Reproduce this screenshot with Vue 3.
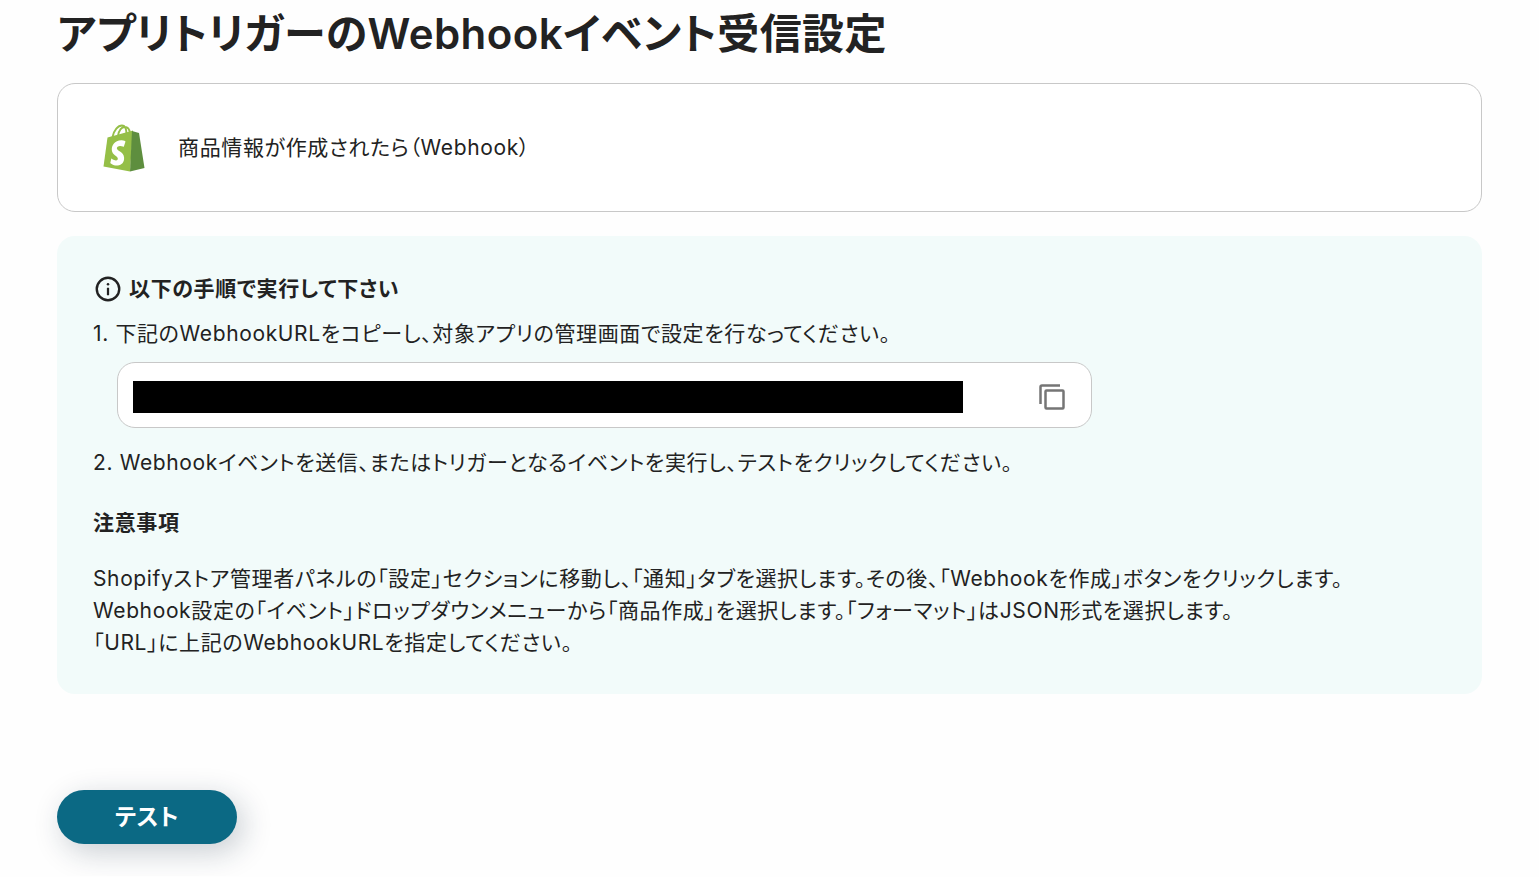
<script setup>
import { ref } from 'vue'

const webhookUrl = ref('')
const notes = [
  'Shopifyストア管理者パネルの「設定」セクションに移動し、「通知」タブを選択します。その後、「Webhookを作成」ボタンをクリックします。',
  'Webhook設定の「イベント」ドロップダウンメニューから「商品作成」を選択します。「フォーマット」はJSON形式を選択します。',
  '「URL」に上記のWebhookURLを指定してください。',
]
</script>

<template>
  <main class="page">
    <h1 class="title">アプリトリガーのWebhookイベント受信設定</h1>

    <section class="card">
      <svg class="logo" viewBox="0 0 42 48" aria-hidden="true">
        <path d="M9.500 13C11 6 15 1.500 19 1.500c3.500 0 4.500 4 4.500 9M15 12c1-6 4-9 7-9 3 0 4.500 2.500 5 6" fill="none" stroke="#95bf47" stroke-width="1.900" />
        <path d="M4.500 13.500 30 6.500l-3 41L.5 42.500Z" fill="#95bf47" />
        <path d="m29 7 7 2 5.500 35L27 47.500Z" fill="#5e8e3e" />
        <path d="m22.500 17.500-1.700 5.300s-1.800-1-3.900-.9c-3 .2-3 2-3 2.500.2 2.500 6.900 3.100 7.200 9 .3 4.700-2.500 7.800-6.400 8-4.800.3-7.400-2.500-7.400-2.500l1-4.300s2.600 2 4.700 1.900c1.400-.1 1.900-1.200 1.800-2-.2-3.300-5.600-3.100-6-8.600-.2-4.600 2.800-9.200 9.400-9.600 2.600-.2 4.300 1.200 4.300 1.200Z" fill="#fff" />
      </svg>
      <p>商品情報が作成されたら（Webhook）</p>
    </section>

    <section class="panel">
      <h2 class="lead">
        <svg class="info" viewBox="0 0 24 24" aria-hidden="true">
          <circle cx="12" cy="12" r="9" fill="none" stroke="currentColor" stroke-width="1.900" />
          <circle cx="12" cy="8.200" r="1" fill="currentColor" />
          <path d="M11.100 11h1.800v6h-1.800z" fill="currentColor" />
        </svg>
        以下の手順で実行して下さい
      </h2>
      <p class="step"><label for="webhook-url">1. 下記のWebhookURLをコピーし、対象アプリの管理画面で設定を行なってください。</label></p>
      <div class="field">
        <input id="webhook-url" v-model="webhookUrl" class="url" type="text" readonly />
        <button class="copy" type="button" aria-label="コピー">
          <svg viewBox="0 0 26 26" aria-hidden="true">
            <path d="M1.500 20V3q0-1.500 1.500-1.500h18" />
            <rect x="6.500" y="6.500" width="18" height="18" rx="1" />
          </svg>
        </button>
      </div>
      <p class="step">2. Webhookイベントを送信、またはトリガーとなるイベントを実行し、テストをクリックしてください。</p>
      <h3 class="caution">注意事項</h3>
      <p v-for="note in notes" :key="note">{{ note }}</p>
    </section>

    <button class="test" type="button">テスト</button>
  </main>
</template>

<style>
body {
  margin: 0;
  background: #fefefe;
}
</style>

<style scoped>
.page {
  padding: 2px 57px 32px;
  color: #222;
  font-family: Inter, "Noto Sans CJK JP", sans-serif;
  font-size: 21px;
  line-height: 32px;
  letter-spacing: 0.03em;
  font-feature-settings: "palt";
}
h1, h2, h3, p {
  margin: 0;
}
.title {
  margin-bottom: 17px;
  font-size: 42px;
  font-weight: 600;
  line-height: 64px;
  letter-spacing: 0.01em;
}
.card {
  display: flex;
  align-items: center;
  gap: 33px;
  box-sizing: border-box;
  min-height: 129px;
  padding: 32px 45px;
  border: 1px solid #c8c8c8;
  border-radius: 18px;
  background: #fff;
}
.logo {
  flex: none;
  width: 42px;
  height: 48px;
}
.panel {
  margin-top: 24px;
  padding: 37px 36px 35px;
  border-radius: 18px;
  background: #f2fbfa;
}
.lead {
  display: flex;
  align-items: center;
  gap: 6px;
  font-size: 21px;
  font-weight: 600;
}
.info {
  width: 30px;
  height: 30px;
}
.step {
  margin-top: 13px;
}
.field {
  display: flex;
  align-items: center;
  justify-content: space-between;
  box-sizing: border-box;
  max-width: 975px;
  margin: 12px 0 19px 24px;
  padding: 18px 26px 14px 15px;
  border: 1px solid #c8c8c8;
  border-radius: 18px;
  background: #fff;
}
.url {
  flex: 0 1 830px;
  box-sizing: border-box;
  min-width: 0;
  height: 32px;
  padding: 0 8px;
  border: 0;
  background: #000;
  color: #fff;
  font: inherit;
}
.copy {
  display: flex;
  padding: 0;
  border: 0;
  background: none;
  cursor: pointer;
}
.copy svg {
  width: 26px;
  height: 26px;
  fill: none;
  stroke: #757575;
  stroke-width: 2.500;
}
.caution {
  margin: 28px 0 24px;
  font-size: 21px;
  font-weight: 600;
}
.test {
  display: block;
  min-width: 180px;
  height: 54px;
  margin-top: 96px;
  padding: 0 32px 4px;
  border: 0;
  border-radius: 27px;
  background: #0b6984;
  box-shadow: 6px 8px 30px rgba(20, 45, 65, 0.23);
  color: #fff;
  font-family: inherit;
  font-size: 23px;
  font-weight: 700;
  letter-spacing: inherit;
  font-feature-settings: inherit;
  cursor: pointer;
}
</style>
